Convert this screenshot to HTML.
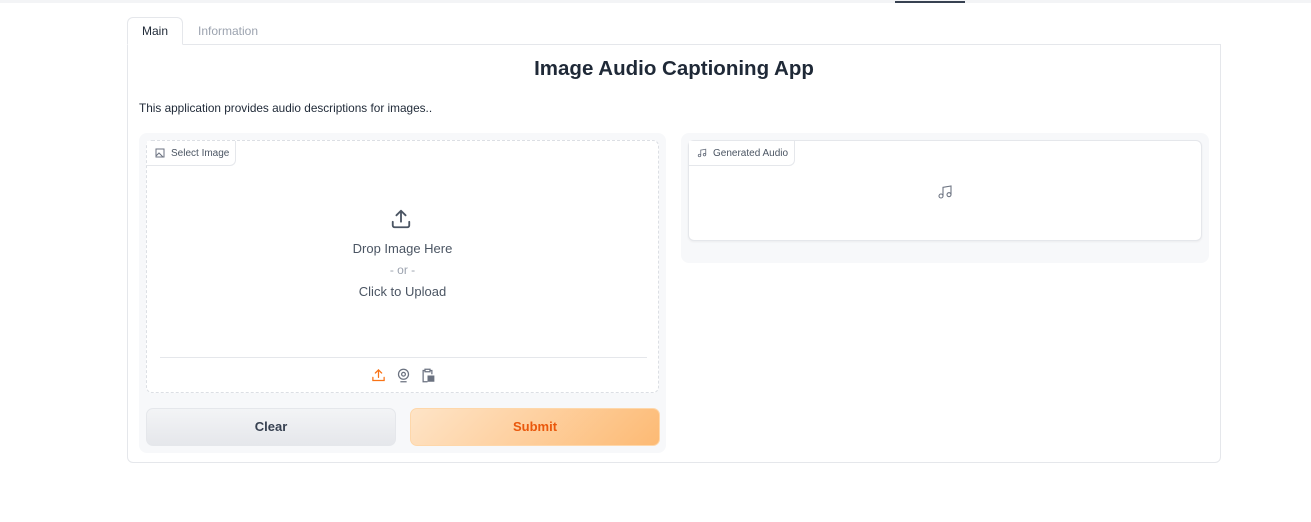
<!DOCTYPE html>
<html><head><style>
*{box-sizing:border-box;margin:0;padding:0}
body{width:1311px;height:522px;background:#fff;font-family:"Liberation Sans",sans-serif;position:relative;overflow:hidden;color:#1f2937}
.a{position:absolute}
.lbl{position:absolute;left:0;top:0;height:25px;border:1px solid #e5e7eb;border-top:none;border-left:none;border-radius:0 0 6px 0;background:#fff;font-size:10px;color:#4b5563;display:flex;align-items:center;padding:0 6px 0 8px;gap:6px}
</style></head><body>
<div class="a" style="left:0;top:0;width:1311px;height:3px;background:#f3f4f6"></div>
<div class="a" style="left:895px;top:1px;width:70px;height:2px;background:#374151"></div>
<div class="a" style="left:127px;top:44px;width:1094px;height:419px;border:1px solid #e5e7eb;border-radius:0 0 6px 6px"></div>
<div class="a" style="left:127px;top:17px;width:56px;height:28px;border:1px solid #e5e7eb;border-bottom:1px solid #fff;border-radius:6px 6px 0 0;background:#fff;font-size:12px;color:#1f2937;text-align:center;line-height:26px">Main</div>
<div class="a" style="left:198px;top:24px;font-size:12px;color:#9ca3af">Information</div>
<div class="a" style="left:127px;width:1094px;top:57px;text-align:center;font-size:20.5px;font-weight:bold;color:#1f2937">Image Audio Captioning App</div>
<div class="a" style="left:139px;top:101px;font-size:11.8px;color:#1f2937">This application provides audio descriptions for images..</div>

<div class="a" style="left:139px;top:133px;width:527px;height:320px;background:#f7f8fa;border-radius:8px"></div>
<div class="a" style="left:146px;top:140px;width:513px;height:253px;background:#fff;border:1px dashed #dcdfe4;border-radius:6px">
 <div class="lbl"><svg width="10" height="10" viewBox="0 0 10 10" fill="none" stroke="#6b7280" stroke-width="1"><rect x="1" y="1" width="8" height="8"/><path d="M1 8l3-3 4 4"/></svg>Select Image</div>
 <svg class="a" style="left:243px;top:67px" width="22" height="22" viewBox="0 0 24 24" fill="none" stroke="#4b5563" stroke-width="2" stroke-linecap="round" stroke-linejoin="round"><path d="M3 15v4a2 2 0 0 0 2 2h14a2 2 0 0 0 2-2v-4M12 3v12M7 8l5-5 5 5"/></svg>
 <div class="a" style="left:0;width:511px;top:97px;text-align:center;font-size:13px;color:#4b5563;line-height:21px">Drop Image Here<br><span style="color:#9ca3af;font-size:12px">- or -</span><br>Click to Upload</div>
 <div class="a" style="left:13px;top:216px;width:487px;height:1px;background:#e5e7eb"></div>
 <svg class="a" style="left:224px;top:227px" width="15" height="15" viewBox="0 0 24 24" fill="none" stroke="#f97316" stroke-width="2" stroke-linecap="round"><path d="M3 15v5h18v-5M12 3v12M7 8l5-5 5 5"/></svg>
 <svg class="a" style="left:249px;top:227px" width="15" height="15" viewBox="0 0 24 24" fill="none" stroke="#6b7280" stroke-width="2"><circle cx="12" cy="10" r="8"/><circle cx="12" cy="10" r="3"/><path d="M7 22h10"/></svg>
 <svg class="a" style="left:273px;top:227px" width="15" height="15" viewBox="0 0 24 24" fill="none" stroke="#6b7280" stroke-width="2"><path d="M8 4H5v18h7M16 4h3v6"/><rect x="8" y="2" width="8" height="4"/><rect x="13" y="13" width="9" height="8" fill="#6b7280"/></svg>
</div>
<div class="a" style="left:146px;top:408px;width:250px;height:38px;background:linear-gradient(#f3f4f6,#e5e7eb);border:1px solid #e5e7eb;border-radius:7px;text-align:center;line-height:36px;font-size:13px;font-weight:bold;color:#374151">Clear</div>
<div class="a" style="left:410px;top:408px;width:250px;height:38px;background:linear-gradient(135deg,#fee4c7,#fdba74);border:1px solid #fed7aa;border-radius:7px;text-align:center;line-height:36px;font-size:13px;font-weight:bold;color:#ea580c">Submit</div>

<div class="a" style="left:681px;top:133px;width:528px;height:130px;background:#f7f8fa;border-radius:8px"></div>
<div class="a" style="left:688px;top:140px;width:514px;height:101px;background:#fff;border:1px solid #e5e7eb;border-radius:6px;box-shadow:0 1px 2px rgba(0,0,0,.05)">
 <div class="lbl"><svg width="10" height="10" viewBox="0 0 24 24" fill="none" stroke="#6b7280" stroke-width="2"><path d="M9 18V5l12-2v13"/><circle cx="6" cy="18" r="3"/><circle cx="18" cy="16" r="3"/></svg>Generated Audio</div>
 <svg class="a" style="left:248px;top:43px" width="16" height="16" viewBox="0 0 24 24" fill="none" stroke="#6b7280" stroke-width="1.6"><path d="M9 18V5l12-2v13"/><circle cx="6" cy="18" r="3"/><circle cx="18" cy="16" r="3"/></svg>
</div>
</body></html>
